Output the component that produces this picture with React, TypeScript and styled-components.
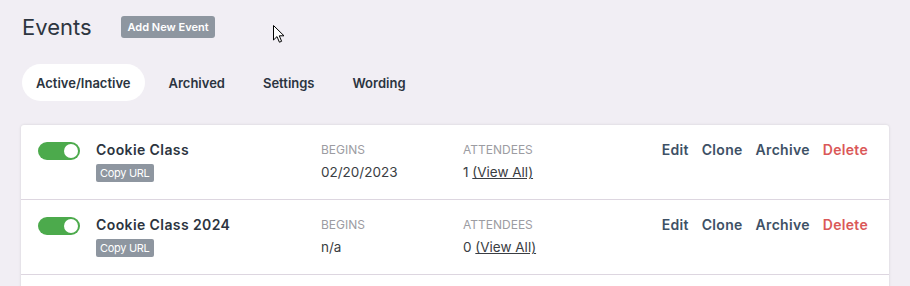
import styled, { createGlobalStyle } from 'styled-components'

const GlobalStyle = createGlobalStyle`
  html, body {
    margin: 0;
    padding: 0;
    background: #f1eef4;
    font-family: 'Inter', 'Noto Sans', sans-serif;
    color: #2d3540;
  }
`

const SPage = styled.div`
  position: relative;
  padding: 16px 21px 0 21px;
`

const SHeader = styled.div`
  display: flex;
  align-items: center;
  height: 22px;
`

const STitle = styled.h1`
  width: 99px;
  margin: 0 0 0 1px;
  font-size: 22px;
  line-height: 22px;
  font-weight: 400;
  color: #2d3540;
`

const SButton = styled.button`
  height: 22px;
  width: 94px;
  padding: 0;
  border: none;
  border-radius: 3px;
  background: #8e96a0;
  color: #fff;
  font-family: inherit;
  font-size: 11px;
  font-weight: 600;
`

const STabs = styled.div`
  display: flex;
  gap: 10px;
  margin: 26px 0 0 1px;
`

const STab = styled.div<{ $active?: boolean }>`
  height: 37px;
  display: flex;
  align-items: center;
  padding: 0 14px;
  border-radius: 19px;
  background: ${(p) => (p.$active ? '#fff' : 'transparent')};
  font-size: 13px;
  font-weight: 600;
  color: #2b3440;
`

const SCard = styled.div`
  margin-top: 24px;
  background: #fff;
  border-radius: 3px;
  box-shadow: 0 0 3px rgba(0, 0, 0, 0.12);
`

const SRow = styled.div`
  display: grid;
  grid-template-columns: 58px 225px 142px 1fr auto;
  align-items: start;
  height: 75px;
  box-sizing: border-box;
  padding: 16px 21px 0 17px;
  border-bottom: 1px solid #ddd6e0;
`

const SToggle = styled.div<{ $on: boolean }>`
  position: relative;
  width: 42px;
  height: 18px;
  margin-top: 1px;
  border-radius: 9px;
  background: ${(p) => (p.$on ? '#4caa4c' : '#c8c8cc')};
  &::after {
    content: '';
    position: absolute;
    top: 2px;
    ${(p) => (p.$on ? 'right: 2px;' : 'left: 2px;')}
    width: 14px;
    height: 14px;
    border-radius: 50%;
    background: #fff;
  }
`

const SName = styled.div`
  font-size: 14px;
  line-height: 18px;
  font-weight: 600;
  letter-spacing: 0.4px;
  color: #2c3440;
`

const SBadge = styled.span`
  display: inline-flex;
  align-items: center;
  height: 18px;
  margin-top: 5px;
  padding: 0 4px;
  border-radius: 2px;
  background: #8e96a0;
  color: #fff;
  font-size: 11px;
  letter-spacing: -0.3px;
`

const SLabel = styled.div`
  font-size: 12px;
  line-height: 18px;
  color: #9c9ca2;
  text-transform: uppercase;
`

const SValue = styled.div`
  margin-top: 4px;
  font-size: 13.5px;
  line-height: 18px;
  color: #3a3d42;
`

const SLink = styled.a`
  color: #3a3d42;
  text-decoration: underline;
`

const SActions = styled.div`
  display: flex;
  gap: 13px;
`

const SAction = styled.a<{ $danger?: boolean }>`
  font-size: 14px;
  line-height: 18px;
  font-weight: 600;
  letter-spacing: 0.3px;
  color: ${(p) => (p.$danger ? '#da5858' : '#3e5166')};
  cursor: pointer;
`

const SEmptyRow = styled.div`
  height: 40px;
`

const SCursor = styled.svg`
  position: absolute;
  left: 273px;
  top: 25px;
`

const events = [
  { name: 'Cookie Class', begins: '02/20/2023', attendees: 1 },
  { name: 'Cookie Class 2024', begins: 'n/a', attendees: 0 },
]

export default function App() {
  return (
    <>
      <GlobalStyle />
      <SPage>
        <SHeader>
          <STitle>Events</STitle>
          <SButton>Add New Event</SButton>
        </SHeader>
        <STabs>
          <STab $active>Active/Inactive</STab>
          <STab>Archived</STab>
          <STab>Settings</STab>
          <STab>Wording</STab>
        </STabs>
        <SCard>
          {events.map((e) => (
            <SRow key={e.name}>
              <SToggle $on />
              <div>
                <SName>{e.name}</SName>
                <SBadge>Copy URL</SBadge>
              </div>
              <div>
                <SLabel>Begins</SLabel>
                <SValue>{e.begins}</SValue>
              </div>
              <div>
                <SLabel>Attendees</SLabel>
                <SValue>
                  {e.attendees} <SLink>(View All)</SLink>
                </SValue>
              </div>
              <SActions>
                <SAction>Edit</SAction>
                <SAction>Clone</SAction>
                <SAction>Archive</SAction>
                <SAction $danger>Delete</SAction>
              </SActions>
            </SRow>
          ))}
          <SEmptyRow />
        </SCard>
        <SCursor width="13" height="19" viewBox="0 0 13 19">
          <path d="M0.5 0.5 L0.5 15 L4 11.6 L6.4 17.2 L8.6 16.3 L6.3 10.8 L11 10.8 Z" fill="#fff" stroke="#000" strokeWidth="1" strokeLinejoin="round" />
        </SCursor>
      </SPage>
    </>
  )
}
